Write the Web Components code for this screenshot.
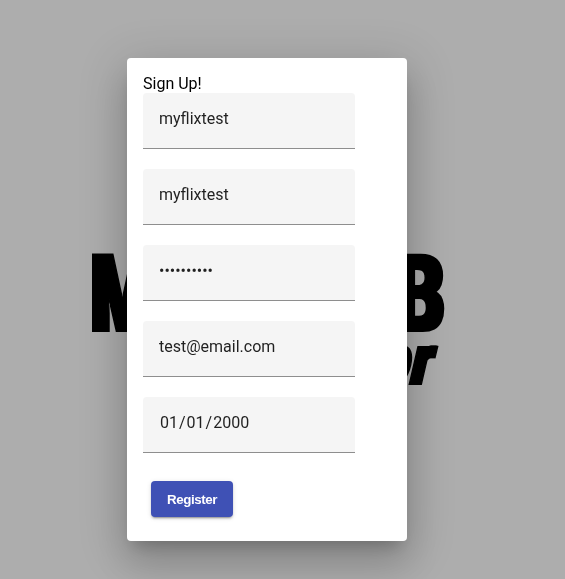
<!DOCTYPE html>
<html lang="en">
<head>
<meta charset="utf-8">
<title>Sign Up</title>
<style>
html,body{margin:0;height:100%;overflow:hidden}
body{background:#adadad;font-family:Roboto,"Liberation Sans",sans-serif;font-size:16px}
</style>
</head>
<body>
<signup-page>
  <brand-logo slot="backdrop"></brand-logo>
  <sign-up-dialog heading="Sign Up!">
    <form-field>myflixtest</form-field>
    <form-field>myflixtest</form-field>
    <form-field>••••••••••</form-field>
    <form-field>test@email.com</form-field>
    <form-field><span>01</span>/<span>01</span>/<span>2000</span></form-field>
    <raised-button slot="actions">Register</raised-button>
  </sign-up-dialog>
</signup-page>
<script>
function define(name, html, setup) {
  customElements.define(name, class extends HTMLElement {
    constructor() {
      super();
      this.attachShadow({mode: 'open'}).innerHTML = html;
    }
    connectedCallback() { if (setup) setup(this); }
  });
}
define('signup-page', `<style>
:host{display:grid;height:579px;width:565px;background:#adadad;overflow:hidden;grid-template:1fr / 1fr}
.layer{grid-area:1/1;min-width:0}
.front{display:flex;align-items:flex-start;padding:58px 0 0 127px;z-index:1}
</style><div class="layer"><slot name="backdrop"></slot></div><div class="layer front"><slot></slot></div>`);

define('brand-logo', `<style>
:host{display:block}svg{display:block}
text{font-family:Roboto,sans-serif;font-weight:900;fill:#000;stroke:#000}
</style>
<svg width="565" height="579" viewBox="0 0 565 579">
<filter id="wide" filterUnits="userSpaceOnUse" x="0" y="200" width="565" height="250"><feMorphology operator="dilate" radius="2 0.01"/></filter>
<g filter="url(#wide)">
<text transform="translate(90.8 331) scale(.67 1)" font-size="108" stroke-width="2">M</text>
<text transform="translate(395 331) scale(.72 1)" font-size="107" stroke-width="2">B</text>
</g>
<g filter="url(#wide)">
<text transform="translate(378 384) skewX(-13) scale(.7 1)" font-size="70" stroke-width="2">o</text>
<text transform="translate(409 384) skewX(-13) scale(.7 1)" font-size="70" stroke-width="2">r</text>
</g>
</svg>`);

define('sign-up-dialog', `<style>
:host{display:flex;flex-direction:column;align-items:flex-start;box-sizing:border-box;width:280px;height:483px;padding:16px;border-radius:4px;background:#fff;color:#000;
box-shadow:0 11px 15px -7px rgba(0,0,0,.2),0 24px 38px 3px rgba(0,0,0,.14),0 9px 46px 8px rgba(0,0,0,.12)}
.title{line-height:19px}
.fields{display:flex;flex-direction:column;gap:20px}
.actions{padding:28px 8px 0}
</style><div class="title"></div><div class="fields"><slot></slot></div><div class="actions"><slot name="actions"></slot></div>`,
  el => { el.shadowRoot.querySelector('.title').textContent = el.getAttribute('heading'); });

define('form-field', `<style>
:host{display:block;box-sizing:border-box;width:212px;height:56px;padding:16px 16px 0;background:#f5f5f5;border-bottom:1px solid #8e8e8e;border-radius:4px 4px 0 0;color:rgba(0,0,0,.87);line-height:19px;white-space:nowrap}
::slotted(span){padding:0 1px}
</style><slot></slot>`);

define('raised-button', `<style>
:host{display:flex;align-items:center;justify-content:center;width:82px;height:36px;border-radius:4px;background:#3f51b5;color:#fff;font:bold 13.333px "Liberation Sans",Arial,sans-serif;letter-spacing:-.4px;
box-shadow:0 3px 1px -2px rgba(0,0,0,.2),0 2px 2px rgba(0,0,0,.14),0 1px 5px rgba(0,0,0,.12)}
</style><slot></slot>`);
</script>
</body>
</html>
